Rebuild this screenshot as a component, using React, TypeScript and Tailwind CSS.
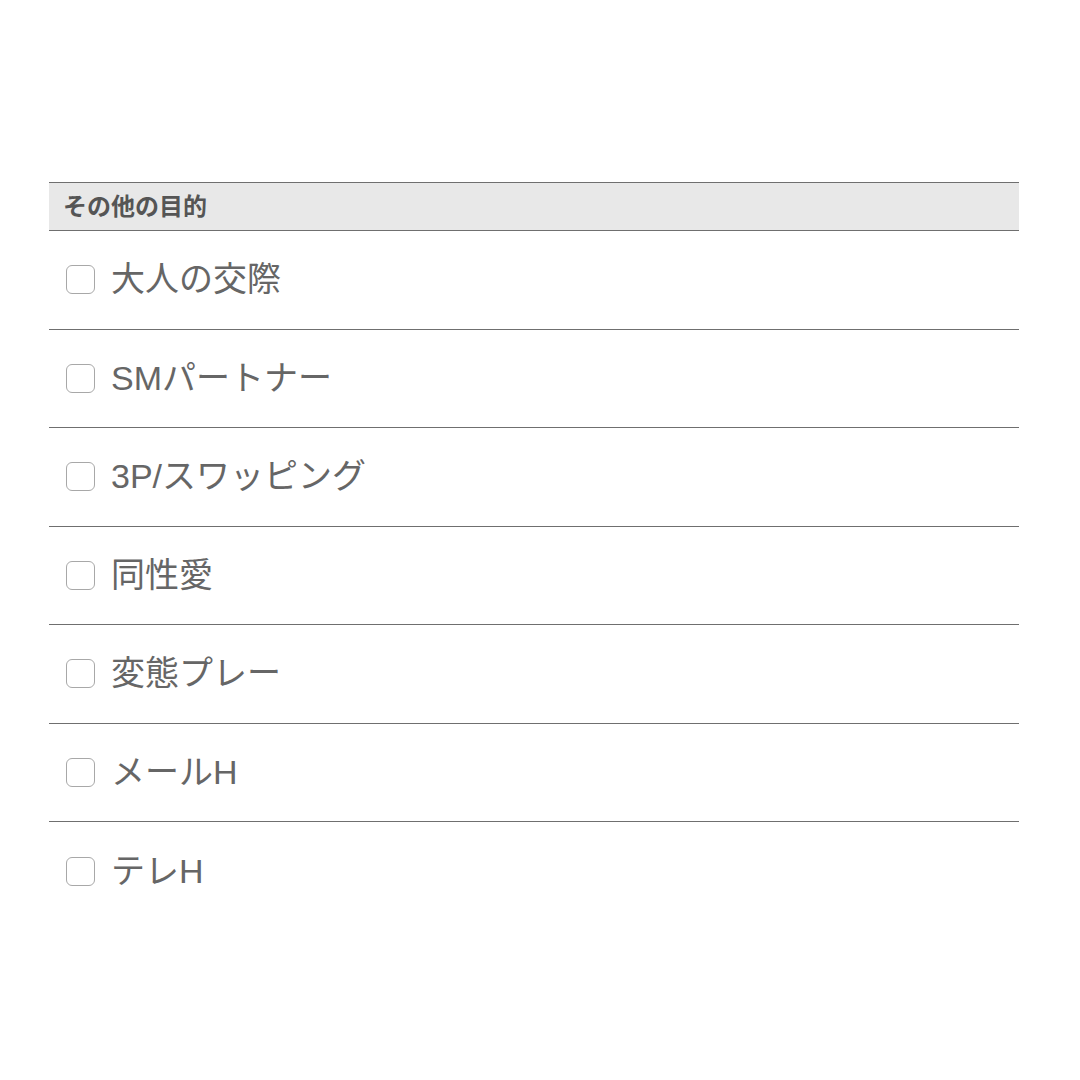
import React from "react";

const items = ["大人の交際", "SMパートナー", "3P/スワッピング", "同性愛", "変態プレー", "メールH", "テレH"];

export default function App() {
  return (
    <div className="w-[1080px] h-[1080px] bg-white" style={{ fontFamily: '"Liberation Sans", "Noto Sans CJK JP", sans-serif' }}>
      <div className="pt-[182px] pl-[49px] w-[1019px]">
        <div className="h-[49px] bg-[#e8e8e8] border-t border-b border-[#6f6f6f] flex items-center pl-[14px]">
          <span className="text-[24px] font-bold text-[#555555] leading-none">その他の目的</span>
        </div>
        {items.map((t, i) => (
          <div
            key={t}
            className={`h-[98.5px] flex items-center ${i < items.length - 1 ? "border-b border-[#6f6f6f]" : ""}`}
          >
            <div className="ml-[17px] w-[29px] h-[29px] rounded-[6px] border-[1.5px] border-[#a8a8a8] bg-white shrink-0" />
            <span className="ml-[16px] text-[34px] text-[#666666] leading-none -mt-[1px]">{t}</span>
          </div>
        ))}
      </div>
    </div>
  );
}
